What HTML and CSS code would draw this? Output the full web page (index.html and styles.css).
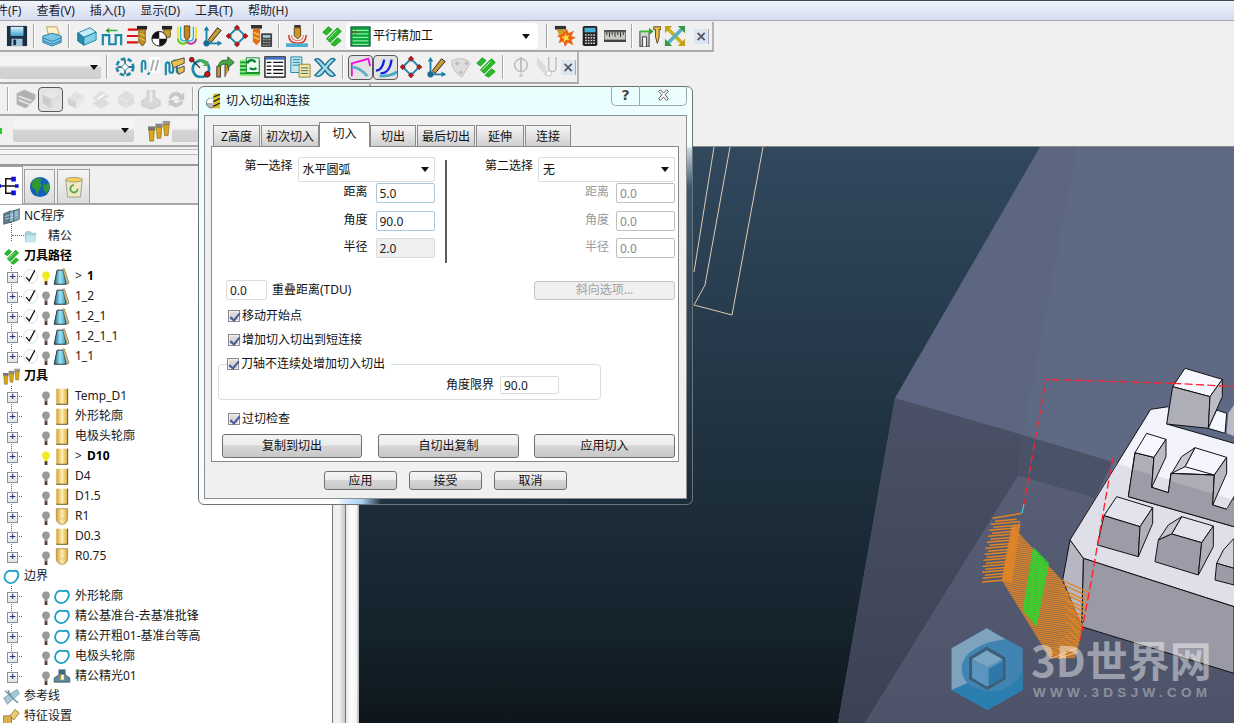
FILE: index.html
```html
<!DOCTYPE html>
<html lang="zh">
<head>
<meta charset="utf-8">
<title>切入切出和连接</title>
<link rel="stylesheet" href="styles.css">
</head>
<body>
<svg class="defs" width="0" height="0">
<defs>
<linearGradient id="gold"><stop offset="0" stop-color="#d2a032"/><stop offset=".5" stop-color="#fff0b8"/><stop offset="1" stop-color="#d8a830"/></linearGradient>
<linearGradient id="cone"><stop offset="0" stop-color="#136a8c"/><stop offset=".5" stop-color="#9fe4f4"/><stop offset="1" stop-color="#2a90b8"/></linearGradient>
<linearGradient id="gray" x1="0" y1="0" x2="0" y2="1"><stop offset="0" stop-color="#ddd"/><stop offset="1" stop-color="#aaa"/></linearGradient>
<linearGradient id="floppy" x1="0" y1="0" x2="0" y2="1"><stop offset="0" stop-color="#dff4ff"/><stop offset="1" stop-color="#3f9fd0"/></linearGradient>
<linearGradient id="midplane" x1="0" y1="0" x2="0" y2="1"><stop offset="0" stop-color="#4a5166"/><stop offset="1" stop-color="#3c4254"/></linearGradient>
<linearGradient id="lowplane" x1="0" y1="0" x2="0" y2="1"><stop offset="0" stop-color="#575e75"/><stop offset="1" stop-color="#4d5369"/></linearGradient>
<pattern id="hatch" width="6" height="6" patternUnits="userSpaceOnUse" patternTransform="rotate(8)"><rect width="6" height="4.500" fill="#e08526"/></pattern>
<pattern id="hatchg" width="6" height="6" patternUnits="userSpaceOnUse" patternTransform="rotate(8)"><rect width="6" height="4.500" fill="#1fe02c"/></pattern>

<symbol id="save" viewBox="0 0 24 24"><rect x="1" y="1" width="22" height="22" fill="#1c2f44"/><rect x="5" y="2" width="14" height="10" fill="url(#floppy)"/><rect x="6" y="15" width="12" height="8" fill="#9fc4d8"/><rect x="8" y="16" width="3" height="6" fill="#1c2f44"/></symbol>
<symbol id="print" viewBox="0 0 24 24"><path d="M6 2h11l3 8H8z" fill="#fff2c8" stroke="#b89a50"/><path d="M2 12l10-3 10 3v7l-10 4-10-4z" fill="#7cc4e4" stroke="#2a7ea8"/><path d="M2 14l10 4 10-4M2 17l10 4 10-4" fill="none" stroke="#2a7ea8"/></symbol>
<symbol id="box" viewBox="0 0 24 24"><path d="M2 8l14-6 7 5-14 6z" fill="#c4eef8" stroke="#167a9c"/><path d="M2 8l7 5v9l-7-5z" fill="#2a8cb0" stroke="#125f80"/><path d="M9 13l14-6v9l-14 6z" fill="#7fd0e6" stroke="#167a9c"/></symbol>
<symbol id="wave" viewBox="0 0 24 24"><path d="M2 22V11h7v10h7V11h6v11" fill="none" stroke="#1b88a8" stroke-width="2.400"/><path d="M6 6h12" stroke="#3aa83a" stroke-width="1.600"/><path d="M9 3L5 6l4 3z" fill="#2aa02a"/></symbol>
<symbol id="tool" viewBox="0 0 24 24"><rect x="4" y="1" width="16" height="22" fill="url(#gold)"/><path d="M20 1v22H4" fill="none" stroke="#6b5420" stroke-width="1.400"/></symbol>
<symbol id="ballnose" viewBox="0 0 24 24"><path d="M4 1h16v14a8 8 0 0 1-16 0z" fill="url(#gold)" stroke="#b08a40" stroke-width="1.200"/><path d="M4 15h16" stroke="#d8c080"/></symbol>
<symbol id="redtool" viewBox="0 0 24 24"><path d="M2 5h11M1 12h12M1 19h12" stroke="#e01010" stroke-width="2.400"/><rect x="12" y="1" width="11" height="4" fill="#222"/><path d="M14 5h7v14l-3 4-4-4z" fill="#c09020" stroke="#6a5010"/><path d="M14 9l7 3M14 14l7 3" stroke="#f0d060"/></symbol>
<symbol id="ball" viewBox="0 0 24 24"><rect x="12" y="1" width="11" height="4" fill="#222"/><path d="M14 5h7v8l-7 2z" fill="#c8a030" stroke="#6a5010"/><circle cx="9" cy="15" r="8" fill="#fff" stroke="#111"/><path d="M9 7a8 8 0 0 0-8 8h8zM9 15v8a8 8 0 0 0 8-8z" fill="#111"/></symbol>
<symbol id="uw" viewBox="0 0 24 24"><path d="M2 2v12c0 8 8 8 10 4 2 4 10 4 10-4V2" fill="none" stroke="#f4e020" stroke-width="2"/><path d="M5 2v11c0 5 5 6 7 2 2 4 7 3 7-2V2" fill="none" stroke="#20b8d8" stroke-width="1.500"/><path d="M9 1h6v12l-3 4-3-4z" fill="#c08820" stroke="#604010"/><path d="M2 15c1 6 8 7 10 3" fill="none" stroke="#58d020" stroke-width="2"/><path d="M12 18c2 4 9 3 10-3" fill="none" stroke="#c030d0" stroke-width="2"/></symbol>
<symbol id="axis" viewBox="0 0 24 24"><path d="M6 20V3M6 20h16" stroke="#1b80a8" stroke-width="2"/><path d="M6 1L3 6h6zM23 20l-5-3v6z" fill="#1b80a8"/><circle cx="6" cy="20" r="3.400" fill="#186a90"/><path d="M8 16L18 3l4 3-11 13z" fill="#c89a30" stroke="#222"/></symbol>
<symbol id="dia" viewBox="0 0 24 24"><path d="M12 3L3 12l9 9 9-9z" fill="none" stroke="#1f88a8" stroke-width="2"/><path d="M12 0l3 3-3 3-3-3zM3 9l3 3-3 3-3-3zM21 9l3 3-3 3-3-3zM12 18l3 3-3 3-3-3z" fill="#d01010" stroke="#333" stroke-width=".6"/></symbol>
<symbol id="toolcalc" viewBox="0 0 24 24"><rect x="0" y="0" width="12" height="4" fill="#333"/><path d="M2 4h8v14l-4 4-4-4z" fill="#e07020"/><path d="M3 8l6 3M3 13l6 3" stroke="#f4d050" stroke-width="1.400"/><rect x="11" y="9" width="12" height="15" fill="#444" rx="1"/><rect x="13" y="11" width="8" height="3" fill="#9fc8e0"/><path d="M13 16h8M13 19h8M13 22h8" stroke="#bbb" stroke-dasharray="2 1"/></symbol>
<symbol id="dig" viewBox="0 0 24 24"><rect x="9" y="0" width="7" height="3" fill="#333"/><path d="M9 3h7v9l-3 3-4-3z" fill="#c89828" stroke="#604010"/><path d="M3 11c0 7 4 9 10 9s9-3 9-9" fill="none" stroke="#e03020" stroke-width="1.600"/><path d="M6 11c0 5 3 6 7 6s6-2 6-6" fill="none" stroke="#e88070" stroke-width="1.200"/><path d="M0 24V20h24v4z" fill="#48b0d0"/></symbol>
<symbol id="green" viewBox="0 0 24 24"><path d="M2 8l6-6 4 3-6 6zM6 15L18 3l4 4-12 12zM11 21l7-7 4 3-7 6z" fill="#2cb82c" stroke="#0ea00e"/><path d="M8 15l9-9" stroke="#c8f8c8" stroke-width="1"/></symbol>
<symbol id="list" viewBox="0 0 24 24"><rect x="1" y="1" width="22" height="22" fill="#0aaa3c" stroke="#043"/><path d="M3 5h18M3 9h18M3 13h18M3 17h18M3 21h18" stroke="#c8ffd0"/><path d="M6 2v10M2 7h8" stroke="#e01010" stroke-dasharray="2 1.400"/></symbol>
<symbol id="bang" viewBox="0 0 24 24"><rect x="1" y="1" width="12" height="4" fill="#333"/><path d="M3 5h9l-1 6-4 4z" fill="#c8a028"/><path d="M14 4l2 5 6-3-3 6 5 2-5 2 2 6-6-3-3 5-2-6-5 2 2-6-4-2 6-2z" fill="#f06010"/><path d="M12 9l2 3 3-1-2 3 2 3-4-1-2 3v-4l-3-2 4-1z" fill="#f8e040"/></symbol>
<symbol id="dlg" viewBox="0 0 24 24"><circle cx="8" cy="15" r="7.500" fill="#b8b8c0" stroke="#444"/><path d="M1 15a7 7 0 0 1 14 0z" fill="#fff"/><path d="M11 1h10v22H11z" fill="#d8c020"/><path d="M11 6l10-4M11 13l10-5M11 20l10-5" stroke="#222" stroke-width="2"/></symbol>
<symbol id="capx" viewBox="0 0 16 16"><path d="M2 3l2-2 4 4 4-4 2 2-4 4 4 5-2 2-4-4-4 4-2-2 4-5z" fill="#fff" stroke="#555" stroke-width="1.200"/></symbol>
<symbol id="calc" viewBox="0 0 24 24"><rect x="4" y="1" width="16" height="22" rx="2" fill="#222"/><rect x="6" y="3" width="12" height="5" fill="#48b0d8"/><path d="M6.500 11h11M6.500 14h11M6.500 17h11M6.500 20h11" stroke="#ccc" stroke-width="1.600" stroke-dasharray="2 1"/></symbol>
<symbol id="ruler" viewBox="0 0 24 24"><rect x="0" y="6" width="24" height="12" fill="#c8c8c0" stroke="#333"/><rect x="0" y="6" width="24" height="2" fill="#555"/><rect x="0" y="16" width="24" height="2" fill="#444"/><path d="M3 8v3M6 8v5M9 8v3M12 8v5M15 8v3M18 8v5M21 8v3" stroke="#222"/></symbol>
<symbol id="tools" viewBox="0 0 24 24"><rect x="1" y="7" width="10" height="17" fill="url(#gray)" stroke="#333"/><rect x="4" y="13" width="4" height="11" fill="#fff" stroke="#333"/><path d="M1 7h12" stroke="#3cb83c" stroke-width="2"/><path d="M11 3l5 4-5 4z" fill="#28a828"/><path d="M16 2h8v3h-2v8l-2 7-2-7V5h-2z" fill="#e8c050" stroke="#604010"/></symbol>
<symbol id="cross" viewBox="0 0 24 24"><path d="M3 3l18 18" stroke="#c8b020" stroke-width="4"/><path d="M21 3L3 21" stroke="#58b0c8" stroke-width="4"/><path d="M1 1h8L1 9zM23 23h-8l8-8z" fill="#c8a018"/><path d="M23 1v8l-8-8zM1 23v-8l8 8z" fill="#3d9a40"/></symbol>
<symbol id="rotate" viewBox="0 0 24 24"><circle cx="12" cy="12" r="9" fill="none" stroke="#1c8aa8" stroke-width="3" stroke-dasharray="5 2.500"/><path d="M4 12h16M12 4v16" stroke="#4c6c80" stroke-width="2"/><path d="M12 8l4 4-4 4-4-4z" fill="#fff" stroke="#1c8aa8"/></symbol>
<symbol id="dash" viewBox="0 0 24 24"><path d="M3 18V9c0-5 4-5 4 0v6M9 20c3 0 3-4 3-6V6" fill="none" stroke="#1c8aa8" stroke-width="2.200"/><rect x="11" y="1" width="12" height="17" fill="#fff"/><path d="M13 16l3-12M18 16l3-12" stroke="#aaa" stroke-width="2"/></symbol>
<symbol id="hatchi" viewBox="0 0 24 24"><path d="M2 21V10c0-4 4-4 4 0v6c0 3 4 3 4 0V8c0-4 4-4 4 0v8c0 3 4 3 4 0" fill="none" stroke="#1c8aa8" stroke-width="2.400"/><path d="M8 6l14-4v6L10 13zM14 14l8-3v6l-6 3z" fill="#e8c050" stroke="#444"/></symbol>
<symbol id="circ" viewBox="0 0 24 24"><circle cx="13" cy="14" r="9" fill="none" stroke="#1c8aa8" stroke-width="3"/><path d="M3 4l9 9" stroke="#222" stroke-width="1.400"/><circle cx="3" cy="4" r="2.500" fill="#e01010" stroke="#222"/><circle cx="20" cy="20" r="3" fill="#e01010" stroke="#222"/><path d="M9 4a9 9 0 0 1 10 3l2-2v6h-6l2-2" fill="#48b048"/></symbol>
<symbol id="arrows" viewBox="0 0 24 24"><path d="M3 23V12c0-2 4-2 4 0v11zM12 23V10c0-2 4-2 4 0v6" fill="#c89a30" stroke="#333"/><path d="M5 11C6 4 11 4 15 5V1l7 6-7 6V9c-4 0-7-1-8 3z" fill="#48a848" stroke="#206020"/></symbol>
<symbol id="docg" viewBox="0 0 24 24"><path d="M1 4h22v18H1z" fill="#9ce87c"/><path d="M1 7h22M1 11h22M1 15h22M1 19h22" stroke="#10a030" stroke-width="2"/><rect x="8" y="2" width="14" height="16" fill="#eafff0" stroke="#108030"/><path d="M18 7a5 5 0 0 0-9 1M12 13a5 5 0 0 0 7 0" fill="none" stroke="#108030" stroke-width="2.500"/></symbol>
<symbol id="table" viewBox="0 0 24 24"><rect x="1" y="1" width="22" height="22" fill="#fff" stroke="#111" stroke-width="1.400"/><rect x="1" y="1" width="22" height="3" fill="#4070c0"/><path d="M3 7h5M10 7h11M3 11h5M10 11h11M3 15h5M10 15h11M3 19h5M10 19h11" stroke="#111" stroke-width="1.400"/></symbol>
<symbol id="copy" viewBox="0 0 24 24"><path d="M2 1h12v17H2z" fill="#bfe8f0" stroke="#1f7ea0"/><path d="M4 4h8M4 7h8M4 10h8" stroke="#1f7ea0"/><path d="M11 9h12v14H11z" fill="#f4e8a0" stroke="#88803a"/><path d="M13 13h8M13 16h8M13 19h8" stroke="#386078"/></symbol>
<symbol id="xc" viewBox="0 0 24 24"><path d="M1 4c3-3 6 0 11 6 5-7 8-9 11-6-3 3-6 5-8 9 3 3 6 5 8 8-4 3-8 0-11-5-3 5-7 8-11 5 3-3 5-5 8-8-3-4-5-6-8-9z" fill="#a8d8e8" stroke="#0f7090" stroke-width="1.500"/></symbol>
<symbol id="pink" viewBox="0 0 24 24"><path d="M2 22V8l18-5 2 8" fill="none" stroke="#f010e0" stroke-width="2"/><path d="M2 12c6 0 12 4 17 10" fill="none" stroke="#5ab0c8" stroke-width="3"/></symbol>
<symbol id="arcs" viewBox="0 0 24 24"><path d="M1 16c4 0 8-4 9-12M6 19c6 0 11-5 12-15" fill="none" stroke="#1020e0" stroke-width="2.500"/><path d="M5 22c8 0 15-1 19-5" fill="none" stroke="#4aa8c8" stroke-width="3"/></symbol>
<symbol id="fan" viewBox="0 0 24 24"><path d="M2 5c9-4 16-2 20 3l-9 15C7 20 2 14 2 5z" fill="#ddd" stroke="#bbb"/><circle cx="8" cy="8" r="2" fill="#bbb"/><circle cx="18" cy="8" r="2" fill="#bbb"/><circle cx="12" cy="18" r="2" fill="#bbb"/></symbol>
<symbol id="bulbd" viewBox="0 0 24 24"><circle cx="12" cy="10" r="7" fill="#eee" stroke="#bbb" stroke-width="1.500"/><path d="M12 1v17" stroke="#bbb" stroke-width="2"/><circle cx="12" cy="21" r="2" fill="#ccc"/></symbol>
<symbol id="ud" viewBox="0 0 24 24"><path d="M2 1l10 10v11L2 10z" fill="#ddd"/><path d="M15 1v12M23 1v12a4 4 0 0 1-8 0" fill="none" stroke="#bbb" stroke-width="1.500"/><circle cx="15" cy="19" r="3" fill="#fff" stroke="#bbb"/></symbol>
<symbol id="g1" viewBox="0 0 24 24"><path d="M2 6l8-4 12 5v5l-10 10-10-4z" fill="#b0b0b0" stroke="#c8c8c8"/><path d="M4 9l14 5M4 13l12 5" stroke="#e4e4e4" stroke-width="2"/></symbol>
<symbol id="g2" viewBox="0 0 24 24"><path d="M3 7l9-4 9 4-9 5z" fill="#e8e8e8"/><path d="M3 7l9 5v10l-9-5z" fill="#ccc"/><path d="M12 12l9-5v5l-5 3v5l-4 2z" fill="#ddd"/></symbol>
<symbol id="g3" viewBox="0 0 24 24"><path d="M3 11l9-7 9 5-9 6z" fill="#e2e2e2"/><path d="M3 11l9 4v7l-9-4z" fill="#d2d2d2"/><path d="M12 15l9-6v7l-9 6z" fill="#e8e8e8"/></symbol>
<symbol id="g4" viewBox="0 0 24 24"><path d="M2 11l10-8 10 6-6 3 6 5-10 6-10-6 5-3z" fill="#ddd" stroke="#eee"/><path d="M8 12l8-5" stroke="#fff" stroke-width="2"/></symbol>
<symbol id="g5" viewBox="0 0 24 24"><path d="M3 9l9-6 9 5v9l-9 5-9-5z" fill="#ddd"/><path d="M3 9l9 5 9-6M12 14v8" fill="none" stroke="#eee"/></symbol>
<symbol id="g6" viewBox="0 0 24 24"><path d="M2 14l6-4V3h8v7l6 4v5l-10 4-10-4z" fill="#d8d8d8" stroke="#c4c4c4"/><path d="M12 3v12" stroke="#eee" stroke-width="3"/></symbol>
<symbol id="g7" viewBox="0 0 24 24"><path d="M4 12a8 8 0 0 1 14-5l3-2v8h-8l3-2a5 5 0 0 0-9 1zM20 14a8 8 0 0 1-14 4l-2 2v-7h7l-2 2a5 5 0 0 0 8-1z" fill="#c8c8c8"/></symbol>
<symbol id="cutters" viewBox="0 0 24 24"><g><rect x="0" y="7" width="8" height="4" fill="#777"/><path d="M1 11h6l-1 12H2z" fill="#d8a818" stroke="#705010" stroke-width=".6"/><rect x="8" y="4" width="8" height="4" fill="#888"/><path d="M9 8h6l-1 12h-4z" fill="#d8a818" stroke="#705010" stroke-width=".6"/><rect x="16" y="1" width="8" height="4" fill="#999"/><path d="M17 5h6l-1 12h-4z" fill="#d8a818" stroke="#705010" stroke-width=".6"/></g></symbol>
<symbol id="nc" viewBox="0 0 24 24"><path d="M1 8l10-4v16L1 23z" fill="#5f7f90" stroke="#33505f"/><path d="M9 6l7-3v15l-7 3z" fill="#8fb4c4" stroke="#33505f"/><path d="M15 4l8-3v15l-8 3z" fill="#7fa8b8" stroke="#33505f"/><path d="M3 12l6-2M3 16l6-2M11 10l4-1M11 14l4-1M17 7l4-1M17 11l4-1" stroke="#d0e8f0"/></symbol>
<symbol id="folder" viewBox="0 0 24 24"><path d="M2 6l2-3h8l2 3h8l-2 16H3z" fill="#a4d4e0" stroke="#78b4c8"/><path d="M6 10h17l-3 12H3z" fill="#c4e8ee"/></symbol>
<symbol id="check" viewBox="0 0 24 24"><circle cx="12" cy="12" r="11" fill="#fff" stroke="#ddd" stroke-width="1.500"/><path d="M5 13l5 6L19 2" fill="none" stroke="#111" stroke-width="2.200"/></symbol>
<symbol id="bulb" viewBox="0 0 10 18"><circle cx="5" cy="5.500" r="5" fill="currentColor"/><path d="M2.500 8h5L7 13H3z" fill="currentColor"/><rect x="3.200" y="13" width="3.600" height="5" fill="#53382c"/></symbol>
<symbol id="tp" viewBox="0 0 24 24"><path d="M5 3h9l4 20H1z" fill="url(#cone)" stroke="#222" stroke-width="1.200"/><path d="M15 1l7 20-3 2-6-21z" fill="#dcc890" stroke="#786840"/></symbol>
<symbol id="bound" viewBox="0 0 24 24"><path d="M5 6c5-5 7 0 11-2 6-1 7 7 4 11-3 5-7 7-11 6-7-2-9-9-4-15z" fill="none" stroke="#1fa0c8" stroke-width="2.600"/></symbol>
<symbol id="stock" viewBox="0 0 24 24"><path d="M7 2h10v8H7z" fill="#3d6a80"/><path d="M1 14l6-4h10l6 4v6H1z" fill="#5f8aa0" stroke="#2c4a5c"/><rect x="9" y="9" width="6" height="8" fill="#fff" stroke="#886"/><path d="M10 10v6" stroke="#c09020" stroke-width="2"/></symbol>
<symbol id="ref" viewBox="0 0 24 24"><path d="M1 14L20 2l3 6-17 15z" fill="#a8c8d4" stroke="#6e95a8"/><path d="M3 4l18 17M7 3l4 8" stroke="#6e95a8" stroke-width="2" fill="none"/></symbol>
<symbol id="feat" viewBox="0 0 24 24"><rect x="1" y="11" width="11" height="11" fill="#d8b050" stroke="#886820"/><path d="M10 11l7-9 6 5-8 10z" fill="#e8c870" stroke="#886820"/></symbol>
<symbol id="globe" viewBox="0 0 24 24"><circle cx="12" cy="12" r="11" fill="#1460b8"/><path d="M4 5c4-3 8-3 10-2l-2 4 2 3-3 5-2 6-2-6-4-3zM15 10l6-2 2 5-4 6-3-4z" fill="#2f9a30"/></symbol>
<symbol id="bin" viewBox="0 0 24 24"><path d="M3 4h18l-2 19H5z" fill="#f0e8c0" stroke="#9a9a90"/><ellipse cx="12" cy="4" rx="9" ry="2.500" fill="#f4d050" stroke="#9a9a90"/><path d="M12 10a4 4 0 1 0 4 4" fill="none" stroke="#50a860" stroke-width="2"/></symbol>
<symbol id="net" viewBox="0 0 24 24"><path d="M2 12h20M9 12V4h8M9 12v8h8" fill="none" stroke="#111" stroke-width="1.600"/><path d="M15 2h5v5h-5zM15 17h5v5h-5zM19 10h4v4h-4zM0 10h4v4H0z" fill="#1010e0"/></symbol>
</defs>
</svg>

<div class="app">
  <div class="menubar">
    <span>文件(F)</span><span>查看(V)</span><span>插入(I)</span><span>显示(D)</span><span>工具(T)</span><span>帮助(H)</span>
  </div>

  <div class="tb tb1">
    <div class="bar bar1">
      <span class="ic first"><svg><use href="#save"/></svg></span><i class="sep"></i>
      <span class="ic"><svg><use href="#print"/></svg></span><i class="sep"></i>
      <span class="ic ic-s"><svg><use href="#box"/></svg></span>
      <span class="ic"><svg><use href="#wave"/></svg></span>
      <span class="ic"><svg><use href="#redtool"/></svg></span>
      <span class="ic"><svg><use href="#ball"/></svg></span>
      <span class="ic"><svg><use href="#uw"/></svg></span>
      <span class="ic"><svg><use href="#axis"/></svg></span>
      <span class="ic"><svg><use href="#dia"/></svg></span>
      <span class="ic"><svg><use href="#toolcalc"/></svg></span><i class="sep"></i>
      <span class="ic"><svg><use href="#dig"/></svg></span><i class="sep"></i>
      <span class="ic"><svg><use href="#green"/></svg></span>
      <div class="strategy">
        <svg class="strategy-ic"><use href="#list"/></svg>
        <span class="strategy-text">平行精加工</span>
        <b class="arrow"></b>
      </div>
      <i class="sep sep-wide"></i>
      <span class="ic"><svg><use href="#bang"/></svg></span>
      <span class="ic"><svg><use href="#calc"/></svg></span>
      <span class="ic"><svg><use href="#ruler"/></svg></span><i class="sep"></i>
      <span class="ic"><svg><use href="#tools"/></svg></span>
      <span class="ic"><svg><use href="#cross"/></svg></span>
      <span class="tbclose">×</span>
    </div>
  </div>

  <div class="tb tb2">
    <div class="bar bar2">
      <div class="combo combo-cut"><b class="arrow"></b></div><i class="sep"></i>
      <span class="ic"><svg><use href="#rotate"/></svg></span>
      <span class="ic"><svg><use href="#dash"/></svg></span>
      <span class="ic"><svg><use href="#hatchi"/></svg></span>
      <span class="ic"><svg><use href="#circ"/></svg></span>
      <span class="ic"><svg><use href="#arrows"/></svg></span>
      <span class="ic"><svg><use href="#docg"/></svg></span>
      <span class="ic"><svg><use href="#table"/></svg></span>
      <span class="ic"><svg><use href="#copy"/></svg></span>
      <span class="ic ic-end"><svg><use href="#xc"/></svg></span><i class="sep"></i>
      <span class="ic on"><svg><use href="#pink"/></svg></span>
      <span class="ic on"><svg><use href="#arcs"/></svg></span>
      <span class="ic"><svg><use href="#dia"/></svg></span>
      <span class="ic"><svg><use href="#axis"/></svg></span>
      <span class="ic"><svg><use href="#fan"/></svg></span>
      <span class="ic"><svg><use href="#green"/></svg></span><i class="sep"></i>
      <span class="ic"><svg><use href="#bulbd"/></svg></span>
      <span class="ic"><svg><use href="#ud"/></svg></span>
      <span class="tbclose">×</span>
    </div>
  </div>

  <div class="tb tb3">
    <div class="bar bar3">
      <i class="sep"></i>
      <span class="ic"><svg><use href="#g1"/></svg></span>
      <span class="ic on"><svg><use href="#g2"/></svg></span>
      <span class="ic"><svg><use href="#g3"/></svg></span>
      <span class="ic"><svg><use href="#g4"/></svg></span>
      <span class="ic"><svg><use href="#g5"/></svg></span>
      <span class="ic"><svg><use href="#g6"/></svg></span>
      <span class="ic"><svg><use href="#g7"/></svg></span><i class="sep"></i>
    </div>
  </div>

  <div class="tb tb4">
    <div class="bar bar4">
      <i class="stub"></i>
      <div class="combo combo-a"><b class="arrow"></b></div>
      <span class="ic"><svg><use href="#cutters"/></svg></span>
      <div class="combo combo-b"></div>
    </div>
  </div>

  <div class="work">
    <aside class="side">
      <div class="grip"></div>
      <div class="tabs">
        <span class="ptab active"><svg class="net"><use href="#net"/></svg></span>
        <span class="ptab"><svg><use href="#globe"/></svg></span>
        <span class="ptab"><svg><use href="#bin"/></svg></span>
      </div>
      <div class="panes">
        <div class="tree">
          <div class="n root"><svg><use href="#nc"/></svg><span>NC程序</span></div>
          <div class="n leaf"><i class="dots"></i><svg><use href="#folder"/></svg><span>精公</span></div>
          <div class="n root"><svg><use href="#green"/></svg><span class="b">刀具路径</span></div>
          <div class="n"><i class="x"></i><svg class="ck"><use href="#check"/></svg><svg class="bl lit"><use href="#bulb"/></svg><svg class="ti"><use href="#tp"/></svg><span><span class="pre">&gt;</span> <span class="b">1</span></span></div>
          <div class="n"><i class="x"></i><svg class="ck"><use href="#check"/></svg><svg class="bl"><use href="#bulb"/></svg><svg class="ti"><use href="#tp"/></svg><span>1_2</span></div>
          <div class="n"><i class="x"></i><svg class="ck"><use href="#check"/></svg><svg class="bl"><use href="#bulb"/></svg><svg class="ti"><use href="#tp"/></svg><span>1_2_1</span></div>
          <div class="n"><i class="x"></i><svg class="ck"><use href="#check"/></svg><svg class="bl"><use href="#bulb"/></svg><svg class="ti"><use href="#tp"/></svg><span>1_2_1_1</span></div>
          <div class="n"><i class="x end"></i><svg class="ck"><use href="#check"/></svg><svg class="bl"><use href="#bulb"/></svg><svg class="ti"><use href="#tp"/></svg><span>1_1</span></div>
          <div class="n root"><svg><use href="#cutters"/></svg><span class="b">刀具</span></div>
          <div class="n"><i class="x"></i><i class="nock"></i><svg class="bl"><use href="#bulb"/></svg><svg class="ti"><use href="#tool"/></svg><span>Temp_D1</span></div>
          <div class="n"><i class="x"></i><i class="nock"></i><svg class="bl"><use href="#bulb"/></svg><svg class="ti"><use href="#tool"/></svg><span>外形轮廓</span></div>
          <div class="n"><i class="x"></i><i class="nock"></i><svg class="bl"><use href="#bulb"/></svg><svg class="ti"><use href="#tool"/></svg><span>电极头轮廓</span></div>
          <div class="n"><i class="x"></i><i class="nock"></i><svg class="bl lit"><use href="#bulb"/></svg><svg class="ti"><use href="#tool"/></svg><span><span class="pre">&gt;</span> <span class="b">D10</span></span></div>
          <div class="n"><i class="x"></i><i class="nock"></i><svg class="bl"><use href="#bulb"/></svg><svg class="ti"><use href="#tool"/></svg><span>D4</span></div>
          <div class="n"><i class="x"></i><i class="nock"></i><svg class="bl"><use href="#bulb"/></svg><svg class="ti"><use href="#tool"/></svg><span>D1.5</span></div>
          <div class="n"><i class="x"></i><i class="nock"></i><svg class="bl"><use href="#bulb"/></svg><svg class="ti"><use href="#ballnose"/></svg><span>R1</span></div>
          <div class="n"><i class="x"></i><i class="nock"></i><svg class="bl"><use href="#bulb"/></svg><svg class="ti"><use href="#tool"/></svg><span>D0.3</span></div>
          <div class="n"><i class="x end"></i><i class="nock"></i><svg class="bl"><use href="#bulb"/></svg><svg class="ti"><use href="#ballnose"/></svg><span>R0.75</span></div>
          <div class="n root"><svg><use href="#bound"/></svg><span>边界</span></div>
          <div class="n"><i class="x"></i><i class="nock"></i><svg class="bl"><use href="#bulb"/></svg><svg class="ti"><use href="#bound"/></svg><span>外形轮廓</span></div>
          <div class="n"><i class="x"></i><i class="nock"></i><svg class="bl"><use href="#bulb"/></svg><svg class="ti"><use href="#bound"/></svg><span>精公基准台-去基准批锋</span></div>
          <div class="n"><i class="x"></i><i class="nock"></i><svg class="bl"><use href="#bulb"/></svg><svg class="ti"><use href="#bound"/></svg><span>精公开粗01-基准台等高</span></div>
          <div class="n"><i class="x"></i><i class="nock"></i><svg class="bl"><use href="#bulb"/></svg><svg class="ti"><use href="#bound"/></svg><span>电极头轮廓</span></div>
          <div class="n"><i class="x end"></i><i class="nock"></i><svg class="bl"><use href="#bulb"/></svg><svg class="ti"><use href="#stock"/></svg><span>精公精光01</span></div>
          <div class="n root"><svg><use href="#ref"/></svg><span>参考线</span></div>
          <div class="n root"><svg><use href="#feat"/></svg><span>特征设置</span></div>
        </div>
        <div class="splitter"><i></i><i></i></div>
      </div>
    </aside>

    <main class="view">
      <svg class="scene" viewBox="359 147 875 576" width="875" height="576">
        <path d="M1040 147H1234V723H838L895 398z" fill="#5c6680"/>
        <path d="M1077 147H1234V470H1113L1023 435z" fill="#5e6983"/>
        <path d="M895 398L1023 435 1018 476 865 723H838z" fill="url(#midplane)"/>
        <path d="M1023 435L1113 462 1095 498 1018 476z" fill="#4a5268"/>
        <path d="M1018 476L1095 498 1083 627 1234 673V723H865z" fill="url(#lowplane)"/>
        <path d="M730 147L705 285 694 305 732 315 763 147M714 147L694 272" fill="none" stroke="#dccbb4" stroke-width="1"/>
        <g transform="translate(880 350) scale(.33333)" stroke="#111" stroke-width="3" stroke-linejoin="round">
          <path d="M812 178L865 170 860 222 1062 280V770L610 625 570 570z" fill="#f2f3fc" stroke="none"/>
          <path d="M710 340L1062 450V770L610 625 570 570z" fill="#dedfe8" stroke="none"/>
          <path d="M865 170L812 178 570 570 610 625 1062 770M860 222L1062 280" fill="none"/>
          <path d="M610 625L1062 770V970L605 830z" fill="#9a9aa6"/>
          <path d="M570 570L610 625 605 830 548 690z" fill="#b6b7c2"/>
          <path d="M915 55L1027 88 990 140 878 110z" fill="#f7f7ff"/>
          <path d="M878 110L990 140 985 235 860 222z" fill="#aeaeb8"/>
          <path d="M990 140L1027 88 1027 140 985 235z" fill="#bcbcc6"/>
          <path d="M1010 180L1040 190 1035 250 985 235z" fill="#f7f7ff"/>
          <path d="M1062 165L1045 190 1040 250 1062 258z" fill="#bcbcc6" stroke="none"/>
          <path d="M765 308L822 322 815 412 865 428 873 370 1003 375 998 465 1040 478 1062 440V530L745 440z" fill="#aeaeb8"/>
          <path d="M758 357L818 375 815 412 865 428 871 392 1000 432 998 465 1040 478 1062 450V530L745 440z" fill="#9c9ca8" stroke="none"/>
          <path d="M765 308L745 440 1062 530M765 308L822 322 815 412 865 428 873 370 1003 375 998 465 1040 478" fill="none"/>
          <path d="M800 250L858 268 822 322 765 308z" fill="#f7f7ff"/>
          <path d="M822 322L858 268 858 320 815 412z" fill="#bcbcc6"/>
          <path d="M945 293L1040 322 1003 375 915 350z" fill="#f5f5ff"/>
          <path d="M945 293L915 350 875 370 905 320z" fill="#c8c8d4"/>
          <path d="M1003 375L1040 322 1040 370 998 465z" fill="#b8b8c2"/>
          <path d="M710 440L818 473 780 530 672 497z" fill="#e2e3eb"/>
          <path d="M672 497L780 530 775 620 652 585z" fill="#9c9ca8"/>
          <path d="M780 530L818 473 818 520 775 620z" fill="#b0b0ba"/>
          <path d="M905 500L1000 528 965 578 875 552z" fill="#e2e3eb"/>
          <path d="M905 500L875 552 835 570 865 525z" fill="#c4c4d0"/>
          <path d="M835 570L875 552 965 578 955 675 825 635z" fill="#9c9ca8"/>
          <path d="M965 578L1000 528 1000 590 955 675z" fill="#b0b0ba"/>
          <path d="M1062 565L1030 600 1010 640 1062 655z" fill="#d0d0da"/>
          <path d="M1010 640L1062 655V705L1005 690z" fill="#9c9ca8"/>
        </g>
        <g transform="translate(880 350) scale(.33333)">
          <path d="M395 525L545 690 610 830 585 925 510 925 365 690z" fill="url(#hatch)"/>
          <path d="M398 525L422 520 395 700 368 690z" fill="#e08526" opacity=".85"/>
          <path d="M338 505L425 490M345 514L410 508M332 523L420 515M340 532L408 526M328 541L415 533M336 550L405 544M324 559L412 551M332 568L402 562M320 577L408 569M328 586L398 580M316 595L404 587M324 604L395 598M314 613L400 605M320 622L392 616M310 631L396 623M318 640L388 634M308 649L392 641M316 658L384 652M306 667L388 659M314 676L380 670M308 685L384 677M306 696L376 690" fill="none" stroke="#e08526" stroke-width="4.500"/>
          <path d="M545 690L628 728M550 704L625 740M540 716L622 752M555 730L620 764M545 742L618 776M560 755L615 788M550 767L612 800M565 780L610 812M555 792L607 824M570 805L604 836M560 817L601 848M575 830L598 860M565 843L598 872M555 855L596 885M545 867L590 895M535 880L585 905M525 893L575 915M515 905L560 922" fill="none" stroke="#e08526" stroke-width="4"/>
          <path d="M515 925L590 895M535 925L595 905" stroke="#f4c080" stroke-width="3"/>
          <path d="M460 590L507 640 470 830 428 780z" fill="url(#hatchg)"/>
          <path d="M880 100L1062 110M880 100L498 88 430 470M698 325L628 725 600 870" fill="none" stroke="#ff2030" stroke-width="4" stroke-dasharray="24 10"/>
          <path d="M432 462L426 490" stroke="#40e0f0" stroke-width="3"/>
          <path d="M320 835L428 895V1020L322 1080 215 1020V895z" fill="#3f88b5" opacity=".95"/>
          <path d="M320 835L215 895V1020L262 1000C215 940 270 880 375 868z" fill="#7fa3bd"/>
          <path d="M215 1020L322 1080 428 1020V960C400 1030 320 1040 262 1000z" fill="#2a7fb0"/>
          <path d="M320 895L372 925V985L322 1015 272 985V925z" fill="#5a94b8" stroke="#3f5d76" stroke-width="9"/>
          <path d="M322 903L366 927 322 950 277 927z" fill="#7aa6c4"/>
          <path d="M277 934L318 956V1008L277 984z" fill="#5a96bf"/>
          <path d="M326 956L368 934V984L326 1008z" fill="#2c78a8"/>
        </g>
        <text class="wm" x="1031" y="677">3D世界网</text>
        <text class="wm2" x="1033" y="697" textLength="174" lengthAdjust="spacing">WWW.3DSJW.COM</text>
      </svg>
    </main>
  </div>

  <section class="dialog">
    <header class="dlg-title">
      <svg class="dlg-ic"><use href="#dlg"/></svg>
      <span>切入切出和连接</span>
      <div class="caption"><span class="cap-help">?</span><span class="cap-x"><svg><use href="#capx"/></svg></span></div>
    </header>
    <div class="dlg-body">
      <nav class="dtabs">
        <span class="dtab w1">Z高度</span><span class="dtab w2">初次切入</span><span class="dtab cur">切入</span><span class="dtab w3">切出</span><span class="dtab w2">最后切出</span><span class="dtab w4">延伸</span><span class="dtab w3">连接</span>
      </nav>
      <div class="page">
        <div class="choices">
          <div class="chooser">
            <div class="f"><label>第一选择</label><div class="sel"><span>水平圆弧</span><b class="arrow"></b></div></div>
            <div class="f"><label>距离</label><input class="num blue" value="5.0"></div>
            <div class="f"><label>角度</label><input class="num blue" value="90.0"></div>
            <div class="f"><label>半径</label><input class="num ro" value="2.0" readonly></div>
          </div>
          <i class="vbar"></i>
          <div class="chooser second">
            <div class="f"><label>第二选择</label><div class="sel"><span>无</span><b class="arrow"></b></div></div>
            <div class="f off"><label>距离</label><input class="num" value="0.0" disabled></div>
            <div class="f off"><label>角度</label><input class="num" value="0.0" disabled></div>
            <div class="f off"><label>半径</label><input class="num" value="0.0" disabled></div>
          </div>
        </div>
        <div class="overlap">
          <input class="num small" value="0.0"><label>重叠距离(TDU)</label>
          <button class="btn ramp" disabled>斜向选项...</button>
        </div>
        <label class="chk"><i class="box"></i>移动开始点</label>
        <label class="chk"><i class="box"></i>增加切入切出到短连接</label>
        <fieldset class="grp">
          <legend><label class="chk chk-l"><i class="box"></i>刀轴不连续处增加切入切出</label></legend>
          <div class="grp-row"><label>角度限界</label><input class="num plain" value="90.0"></div>
        </fieldset>
        <label class="chk gouge"><i class="box"></i>过切检查</label>
        <div class="acts">
          <button class="btn a1">复制到切出</button><button class="btn a2">自切出复制</button><button class="btn a2 a3">应用切入</button>
        </div>
      </div>
      <div class="foot">
        <button class="btn f1">应用</button><button class="btn f1">接受</button><button class="btn f1">取消</button>
      </div>
    </div>
  </section>
</div>
</body>
</html>
```

FILE: styles.css
```css
* { box-sizing: border-box; }
html, body { margin: 0; height: 100%; overflow: hidden; }
body {
  font: 12px/16px "Noto Sans", "Noto Sans CJK SC", sans-serif;
  color: #111;
  background: #f0f0f0;
}
.defs { position: absolute; }
.app { position: relative; width: 1234px; height: 723px; overflow: hidden; display: flex; flex-direction: column; }

.menubar {
  height: 21px; flex: none;
  border-top: 1px solid #3c4a58;
  border-bottom: 1px solid #a6a8ae;
  background: linear-gradient(#f3f6fb 0, #e6eaf6 35%, #d5ddf0 100%);
  display: flex; align-items: center; gap: 15px;
  margin-bottom: 1px;
  color: #1c2430;
  white-space: nowrap;
}
.menubar span:first-child { margin-left: -16px; }

.tb { flex: none; display: flex; }
.tb1 { height: 30px; }
.tb2 { height: 32px; }
.tb3 { height: 32px; }
.tb4 { height: 31px; }
.bar { display: flex; align-items: center; border-bottom: 2px solid #a9a9a9; border-right: 2px solid #b4b4b4; height: 100%; }
.bar1 { width: 714px; padding-left: 4px; }
.bar2 { width: 579px; }
.bar3 { width: 371px; padding-left: 7px; }
.bar4 { width: 371px; border-right: 0; }
.ic { width: 25px; height: 25px; flex: none; display: flex; align-items: center; justify-content: center; }
.ic svg { width: 22px; height: 22px; }
.ic-s svg { width: 21px; height: 21px; }
.ic.on { background: #e3e3e3; border: 1px solid #5a5a5a; border-radius: 4px; }
.sep { width: 2px; height: 24px; flex: none; margin: 0 4px; background: linear-gradient(90deg, #a8a8a8 50%, #fff 50%); }
.sep-wide { margin-left: 8px; }
.bar3 .sep:first-child { margin: 0 4px 0 0; }
.strategy { width: 192px; height: 26px; margin-left: 2px; flex: none; display: flex; align-items: center; background: #fff; border-radius: 4px; padding: 0 8px 0 4px; position: relative; }
.strategy-ic { width: 21px; height: 21px; flex: none; }
.strategy-text { margin-left: 2px; }
.strategy .arrow { margin-left: auto; }
.arrow { width: 0; height: 0; display: block; flex: none; border: 4px solid transparent; border-top: 5px solid #111; border-bottom: 0; }
.tbclose { width: 15px; height: 15px; flex: none; margin-left: 3px; background: #dbe6f1; border-right: 1px solid #aaa; color: #556; font: bold 14px/15px "DejaVu Sans", sans-serif; text-align: center; }
.bar1 .tbclose { margin-left: 7px; }
.combo { height: 23px; background: linear-gradient(#f4f4f4 40%, #d4d4d4 52%, #cfcfcf 100%); display: flex; align-items: center; justify-content: flex-end; padding-right: 3px; flex: none; border-radius: 2px; }
.combo-cut { width: 101px; margin-right: 2px; }
.combo-a { width: 121px; margin-left: 11px; margin-right: 1px; padding-right: 5px; }
.combo-b { width: 200px; margin-left: 1px; }
.bar2 .sep:nth-child(2) { margin: 0 4px 0 3px; }
.ic-end { margin-right: 1px; }
.stub { width: 2px; height: 6px; background: #20d020; flex: none; }
.bar4 .ic { margin-left: 11px; }

.work { flex: 1; display: flex; min-height: 0; }
.side { width: 359px; flex: none; display: flex; flex-direction: column; }
.grip { height: 19px; flex: none; border-bottom: 2px solid #9a9a9a; background: linear-gradient(#f0f0f0 2px, #b8b8b8 2px, #b8b8b8 3px, #f6f6f6 3px, #f6f6f6 7px, #b8b8b8 7px, #b8b8b8 8px, #f0f0f0 8px); }
.tabs { height: 39px; flex: none; display: flex; align-items: flex-end; gap: 1px; border-bottom: 2px solid #a8a8a8; background: #f0f0f0; }
.ptab { width: 31px; height: 34px; border: 1px solid #a0a0a0; border-bottom: 0; background: linear-gradient(#f4f4f4, #dcdcdc); display: flex; align-items: center; justify-content: center; }
.ptab svg { width: 22px; height: 22px; }
.ptab.active { width: 23px; height: 38px; background: #fff; border-left: 0; overflow: hidden; margin-bottom: -1px; justify-content: flex-end; }
.ptab.active .net { width: 27px; height: 22px; flex: none; margin-left: -5px; }
.ptab + .ptab + .ptab { width: 33px; margin-left: 1px; }

.panes { flex: 1; display: flex; min-height: 0; }
.tree { width: 332px; flex: none; background: #fff; overflow: hidden; white-space: nowrap; color: #1a1a22; padding-top: 1px; }
.n { height: 20px; display: flex; align-items: center; }
.root { padding-left: 3px; }
.root svg { width: 17px; height: 17px; flex: none; margin-right: 4px; }
.leaf { padding-left: 11px; }
.leaf .dots { width: 13px; height: 20px; flex: none; border-left: 1px dotted #666; margin-top: -10px; }
.leaf .dots::after { content: ""; display: block; margin-top: 14px; border-top: 1px dotted #666; }
.leaf svg { width: 13px; height: 13px; flex: none; margin-right: 11px; }
.x { width: 22px; height: 20px; flex: none; background:
  repeating-linear-gradient(#666 0 1px, transparent 1px 2px) 11px 0 / 1px 100% no-repeat,
  repeating-linear-gradient(90deg, #666 0 1px, transparent 1px 2px) 15px 10px / 7px 1px no-repeat;
  position: relative;
}
.x.end { background:
  repeating-linear-gradient(#666 0 1px, transparent 1px 2px) 11px 0 / 1px 10px no-repeat,
  repeating-linear-gradient(90deg, #666 0 1px, transparent 1px 2px) 15px 10px / 7px 1px no-repeat;
}
.x::before {
  content: "+"; display: block; width: 9px; height: 9px; position: absolute; left: 7px; top: 6px;
  border: 1px solid #8a8f98; background: linear-gradient(#fff, #e0e4ea); color: #243a7a;
  font: bold 9px/7px "DejaVu Sans", sans-serif; text-align: center;
}
.ck { width: 15px; height: 15px; flex: none; margin: 0 2px 0 1px; }
.nock { width: 18px; flex: none; }
.bl { width: 8px; height: 14px; flex: none; color: #999; margin: 3px 2px 0; }
.bl.lit { color: #f0ea20; }
.ti { width: 20px; height: 17px; flex: none; margin-right: 3px; }
.b { font-weight: 700; color: #000; }
.pre { margin-right: 2px; }

.splitter { flex: 1; display: flex; border-left: 1px solid #777; }
.splitter i { display: block; }
.splitter i:first-child { width: 13px; background: linear-gradient(90deg, #ececec, #f2f2f2 50%, #c8c8c8); border-right: 1px solid #777; flex: none; }
.splitter i:last-child { flex: 1; background: linear-gradient(90deg, #e8e8e8, #fff 40%, #f4f4f4 80%, #a8a8a8); }

.view { flex: 1; min-width: 0; border-top: 1px solid #8a8a8a; background: linear-gradient(#31485d 0, #25394a 35%, #14222b 85%, #0e161c 100%); margin-top: -1px; overflow: hidden; }
.scene { display: block; }
.wm { font: 700 42px "Noto Sans CJK SC", sans-serif; fill: #fff; fill-opacity: .44; }
.wm2 { font: 700 13.500px "Liberation Sans", sans-serif; fill: #fff; fill-opacity: .36; }

.dialog {
  position: absolute; left: 198px; top: 86px; width: 495px; height: 419px;
  border: 1px solid #6d7478; border-radius: 6px;
  background:
    linear-gradient(90deg, #fdfdfd 0 28%, #cfe6fb 30%, #a9d0f2 33%, #22323f 37%, #1c2c38 100%) bottom / 100% 6px no-repeat,
    linear-gradient(#f2ffff 0 14%, #c4d4e0 15%, #3c566c 24%, #1c2c38 100%) right / 6px 100% no-repeat,
    linear-gradient(#ebffff, #f6fcff);
  padding: 0 5px 5px;
  display: flex; flex-direction: column;
}
.dlg-title { height: 28px; flex: none; display: flex; align-items: center; gap: 4px; position: relative; padding-left: 2px; font-size: 12px; color: #111; }
.dlg-ic { width: 16px; height: 16px; flex: none; }
.caption { position: absolute; right: 0; top: -1px; width: 76px; height: 20px; display: flex; border: 1px solid #a0a8ac; border-top: 0; border-radius: 0 0 5px 5px; }
.cap-help { width: 28px; text-align: center; border-right: 1px solid #a0a8ac; font: bold 14px/18px "DejaVu Sans", sans-serif; color: #444; }
.cap-x { flex: 1; display: flex; align-items: center; justify-content: center; }
.cap-x svg { width: 13px; height: 13px; }

.dlg-body { flex: 1; border: 1px solid #8c9094; background: #f0f0f0; padding: 6px 7px 0 6px; display: flex; flex-direction: column; }
.dtabs { display: flex; height: 24px; padding-left: 2px; flex: none; position: relative; z-index: 1; align-items: flex-end; gap: 1px; }
.dtab { height: 21px; border: 1px solid #8a8a8a; border-bottom: 0; background: linear-gradient(#f6f6f6, #cfcfcf); text-align: center; line-height: 21px; flex: none; white-space: nowrap; }
.w1 { width: 47px; } .w2 { width: 58px; } .w3 { width: 46px; } .w4 { width: 48px; }
.dtab.cur { width: 51px; height: 25px; background: #fff; margin: 0 -1px -1px -1px; line-height: 22px; }
.page { height: 316px; flex: none; border: 1px solid #8a8a8a; background: #fff; padding: 0 3px 0 0; }

.choices { display: flex; padding-top: 10px; height: 111px; }
.chooser { display: grid; width: 223px; grid-template-rows: 26px 28px 27px 20px; }
.chooser.second { width: 229px; }
.vbar { width: 2px; height: 103px; margin: 3px 0 0 10px; background: #5c5c5c; flex: none; }
.f { display: flex; align-items: flex-start; justify-content: flex-end; gap: 8px; }
.f:first-child { gap: 5px; }
.f label { line-height: 18px; }
.f.off { gap: 7px; }
.f.off label { color: #9a9a9a; }
.sel { width: 137px; height: 25px; border: 1px solid #dcdcdc; background: #fff; border-radius: 2px; display: flex; align-items: center; justify-content: space-between; padding: 0 5px 0 4px; }
.num { font: inherit; color: #222; width: 59px; height: 20px; padding: 0 3px; border: 1px solid #c8c8c8; border-radius: 2px; background: #fff; outline: 0; }
.num.blue { border-color: #a8c8e0; }
.num.ro { background: #efefef; border-color: #dcdcdc; }
.num:disabled { background: #fff; color: #8a8a8a; }
.f.off .num { border-color: #c0c0c0; }

.overlap { display: flex; align-items: center; padding-left: 14px; height: 20px; margin-top: 22px; }
.num.small { width: 41px; border-color: #dcdcdc; }
.overlap label { margin-left: 5px; }
.btn { font: inherit; color: #111; height: 24px; border: 1px solid #6f6f6f; border-radius: 3px; background: linear-gradient(#f4f4f4, #ececec 45%, #d6d6d6 50%, #c8c8c8 100%); padding: 0; flex: none; }
.ramp { margin-left: auto; width: 141px; height: 19px; background: #f0f0f0; border-color: #c4c4c4; color: #a0a0a0; line-height: 16px; }

.chk { display: flex; align-items: center; height: 24px; padding-left: 16px; }
.overlap + .chk { margin-top: 4px; }
.box { width: 12px; height: 12px; flex: none; margin-right: 2px; border: 1px solid #8a8a8a; background: linear-gradient(#e4e4e4, #c8c8c8); position: relative; box-shadow: inset 0 0 0 1px #f0f0f0; }
.box::after { content: ""; position: absolute; left: 3px; top: 0; width: 4px; height: 8px; border: solid #4a5a9a; border-width: 0 2px 2px 0; transform: rotate(40deg); }
.grp { margin: 1px 0 0 6px; width: 383px; height: 47px; padding: 0 41px 0 0; border: 1px solid #d4dee6; border-radius: 4px; }
.grp legend { padding: 0 6px 0 0; margin-left: 8px; height: 22px; background: #fff; }
.chk-l { padding-left: 0; height: 22px; }
.grp-row { display: flex; justify-content: flex-end; align-items: center; gap: 6px; height: 22px; margin-top: -1px; }
.num.plain { height: 18px; border-color: #dcdcdc; }
.gouge { margin-top: 7px; }
.acts { display: flex; gap: 16px; padding-left: 10px; margin-top: 3px; }
.a1 { width: 140px; } .a2 { width: 141px; }
.a3 { margin-left: -1px; }
.foot { display: flex; gap: 12px; padding: 9px 0 0 113px; }
.f1 { width: 73px; height: 19px; line-height: 15px; }
```
